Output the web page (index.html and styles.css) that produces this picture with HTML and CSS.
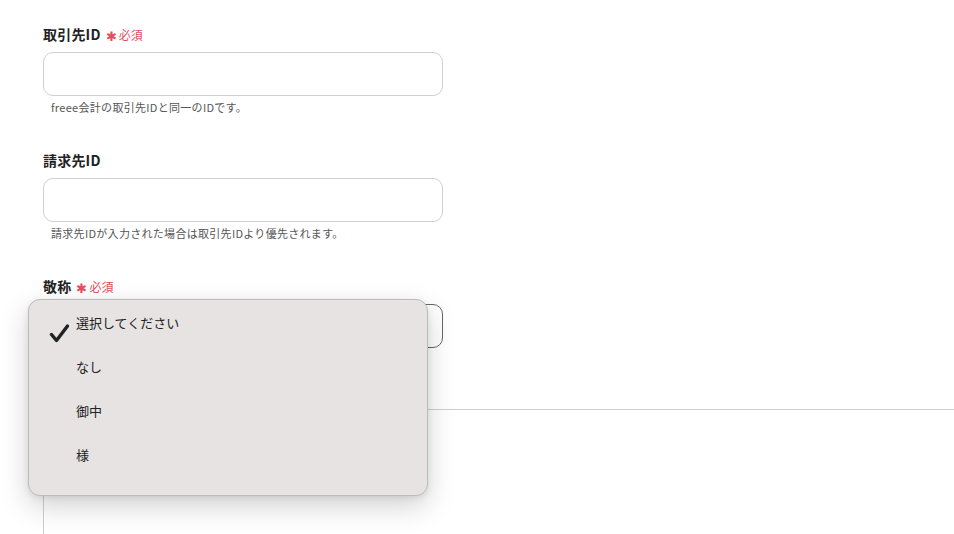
FILE: index.html
```html
<!DOCTYPE html>
<html lang="ja">
<head>
<meta charset="utf-8">
<link rel="stylesheet" href="styles.css">
</head>
<body>
<div class="page">
  <div class="field">
    <div class="label">取引先ID<span class="req"><span class="star">✱</span>必須</span></div>
    <div class="input"></div>
    <div class="help">freee会計の取引先IDと同一のIDです。</div>
  </div>
  <div class="field">
    <div class="label">請求先ID</div>
    <div class="input"></div>
    <div class="help">請求先IDが入力された場合は取引先IDより優先されます。</div>
  </div>
  <div class="field last">
    <div class="label">敬称<span class="req"><span class="star">✱</span>必須</span></div>
    <div class="input select"></div>
  </div>
  <div class="section"></div>

  <div class="menu">
    <div class="item selected">
      <svg class="check" width="20" height="20" viewBox="0 0 20 20"><path d="M2.5 10.5 L7.5 16.5 L18.5 2" fill="none" stroke="#222" stroke-width="3.4" stroke-linecap="round" stroke-linejoin="round"/></svg>
      <span class="text">選択してください</span>
    </div>
    <div class="item"><span class="text">なし</span></div>
    <div class="item"><span class="text">御中</span></div>
    <div class="item"><span class="text">様</span></div>
  </div>
</div>
</body>
</html>
```

FILE: styles.css
```css
* { box-sizing: border-box; }
html, body { margin: 0; padding: 0; background: #fff; }
body {
  font-family: "Noto Sans CJK JP", "Noto Sans", sans-serif;
  color: #222;
  width: 954px;
  height: 534px;
  overflow: hidden;
}
.page {
  position: relative;
  padding: 24px 0 0 43px;
  height: 534px;
  overflow: hidden;
  display: flex;
  flex-direction: column;
}
.field { margin-bottom: 35px; }
.field.last { margin-bottom: 0; }
.label {
  font-size: 14px;
  font-weight: 700;
  line-height: 20px;
  height: 20px;
  margin-bottom: 8px;
  color: #222;
  letter-spacing: 0.2px;
}
.req {
  color: #e2505f;
  font-size: 12px;
  font-weight: 400;
  margin-left: 5px;
  letter-spacing: 0;
}
.star { font-size: 13px; margin-right: 2px; position: relative; top: 1px; }
.input {
  width: 400px;
  height: 44px;
  border: 1px solid #cfcfd4;
  border-radius: 10px;
  background: #fff;
}
.input.select { border-color: #666; }
.help {
  margin-top: 3px;
  padding-left: 8px;
  font-size: 11px;
  line-height: 16px;
  color: #555;
  letter-spacing: 0.3px;
}
.section {
  margin-top: 61px;
  flex: 1;
  border-top: 1px solid #cfcfcf;
  border-left: 1px solid #cfcfcf;
}
.menu {
  position: absolute;
  left: 28px;
  top: 299px;
  width: 400px;
  height: 197px;
  background: #e6e3e2;
  border: 1px solid #bdbaba;
  border-radius: 12px;
  box-shadow: 0 10px 28px rgba(0,0,0,0.18), 0 2px 6px rgba(0,0,0,0.08);
  padding: 1px 0 0 0;
}
.item {
  height: 44px;
  display: flex;
  align-items: center;
  padding-left: 47px;
  position: relative;
}
.text {
  font-size: 13px;
  line-height: 18px;
  color: #222;
}
.check {
  position: absolute;
  left: 20px;
  top: 23px;
}
```
